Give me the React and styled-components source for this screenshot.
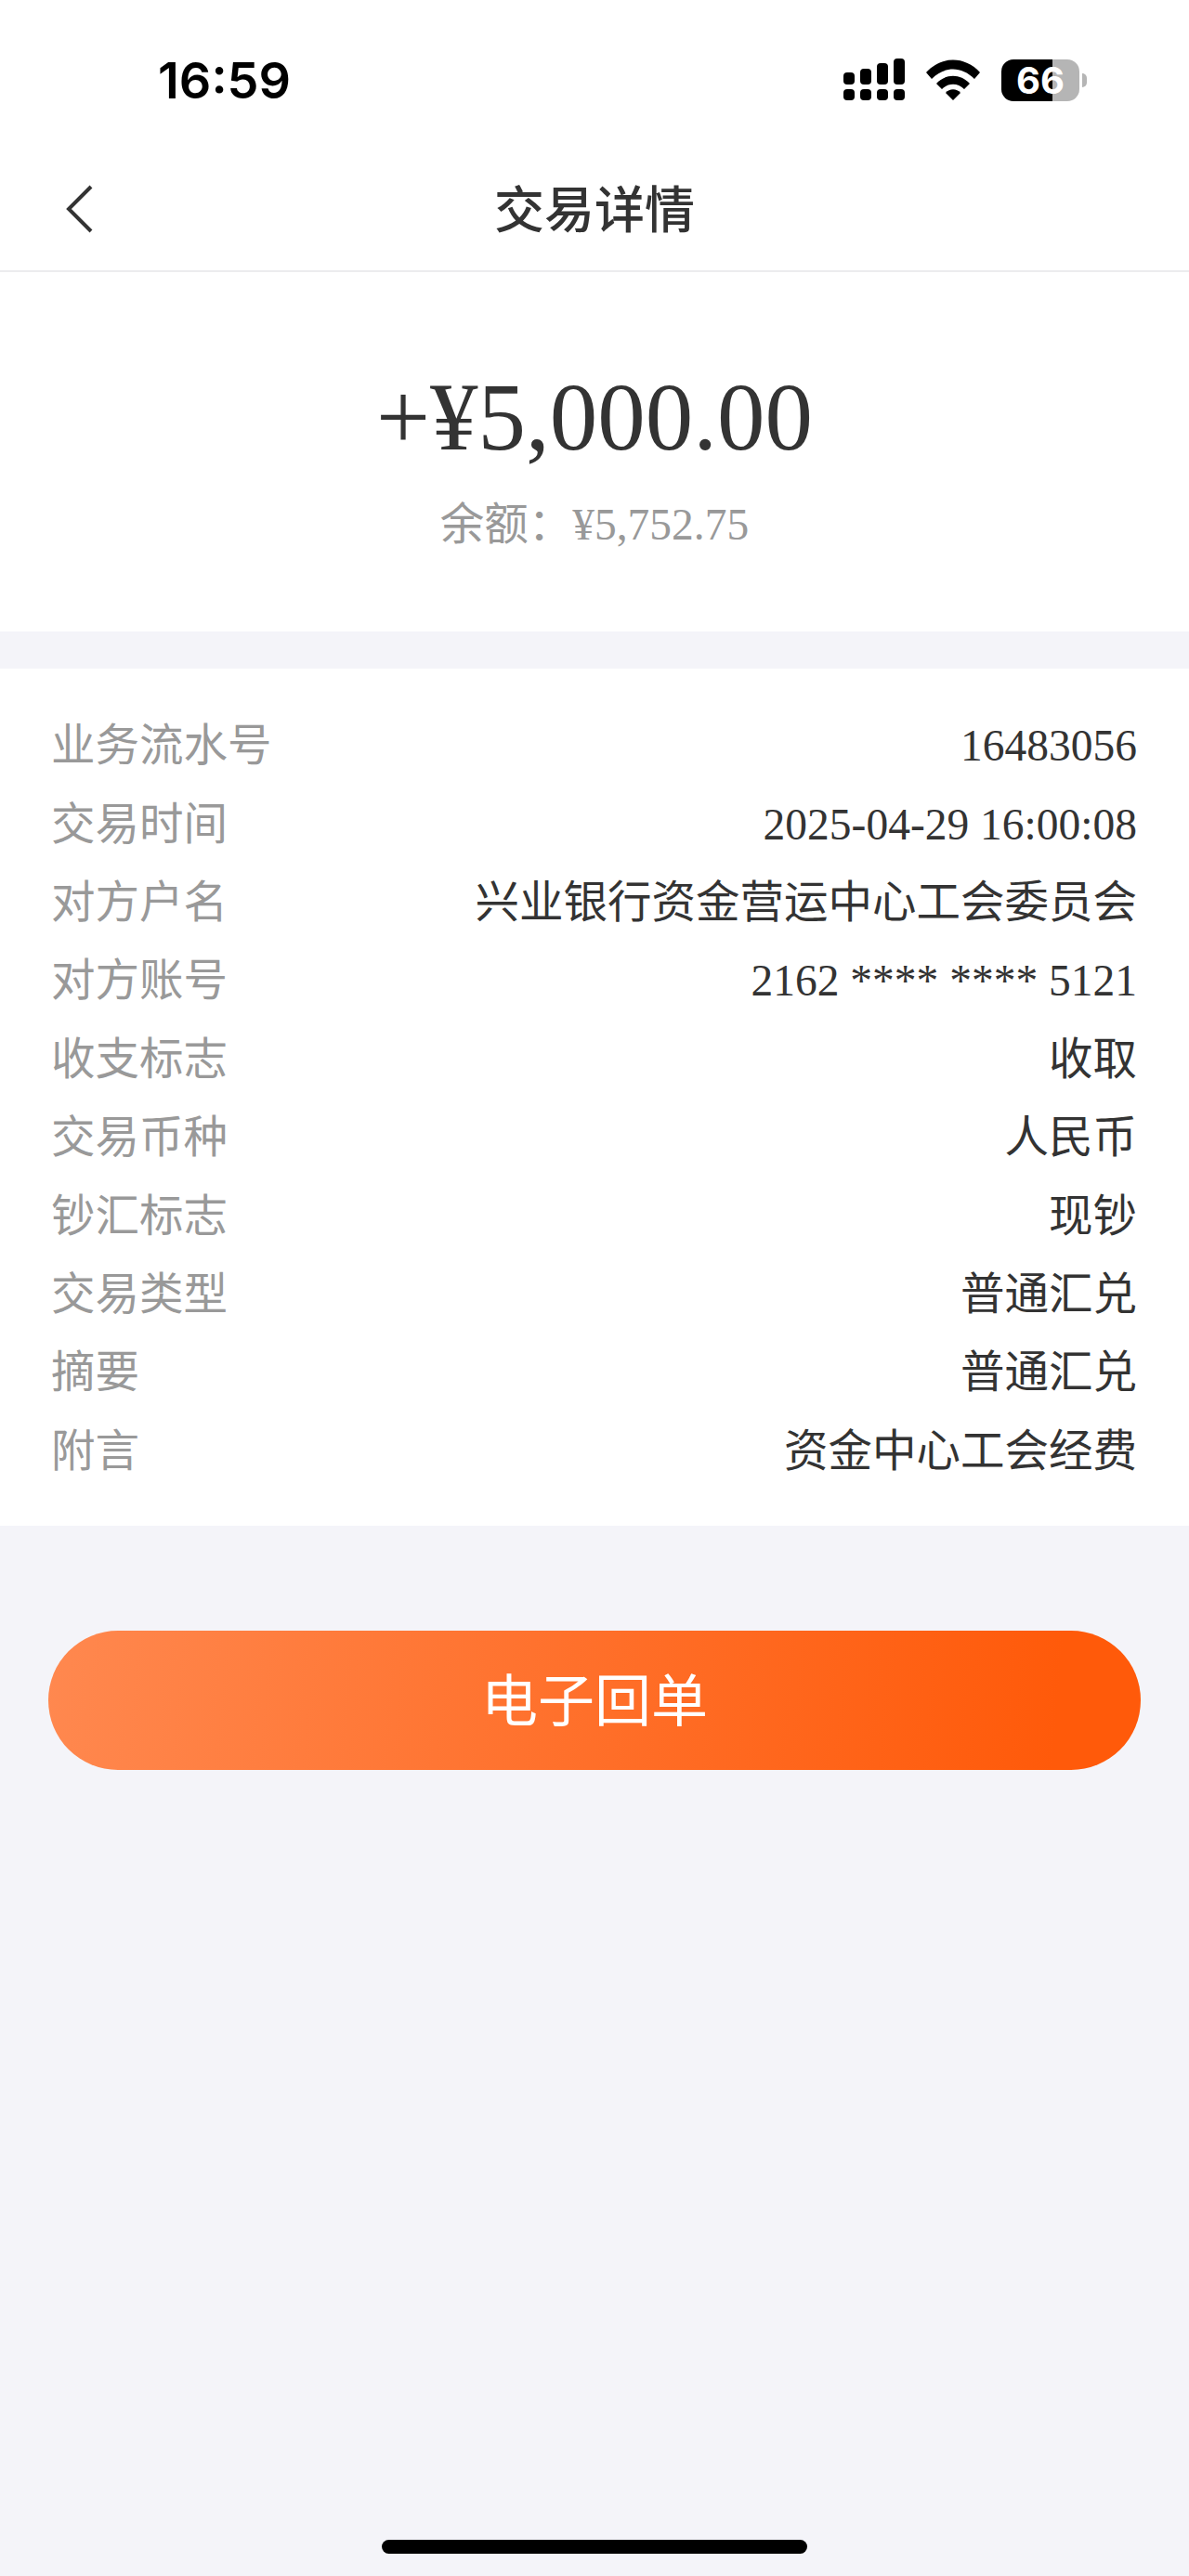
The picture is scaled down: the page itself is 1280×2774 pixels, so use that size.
import React from 'react';
import styled, { createGlobalStyle } from 'styled-components';

const GlobalStyle = createGlobalStyle`
  html, body {
    margin: 0;
    padding: 0;
    background: #f4f4f9;
  }
`;

const CJK_SERIF = `"Liberation Serif", "Noto Sans CJK SC", serif`;

const Page = styled.div`
  width: 1280px;
  height: 2774px;
  display: flex;
  flex-direction: column;
  background: #f4f4f9;
  font-family: ${CJK_SERIF};
`;

const StatusBar = styled.div`
  height: 160px;
  box-sizing: border-box;
  padding: 58px 110px 0 170px;
  background: #fff;
  display: flex;
  justify-content: space-between;
  align-items: flex-start;
`;

const Clock = styled.div`
  font-family: Inter, sans-serif;
  font-weight: 600;
  font-size: 54px;
  line-height: 58px;
  color: #000;
`;

const StatusIcons = styled.div`
  display: flex;
  align-items: center;
  gap: 23px;
  padding-top: 5px;
`;

const Battery = styled.div`
  width: 84px;
  height: 45px;
  border-radius: 13px;
  background: linear-gradient(90deg, #000 0 65%, #b5b5b5 65% 100%);
  text-align: center;
  color: #fff;
  font-family: Inter, sans-serif;
  font-weight: 700;
  font-size: 40px;
  line-height: 45px;
`;

const BatteryGroup = styled.div`
  display: flex;
  align-items: center;
  gap: 3px;
`;

const BatteryCap = styled.div`
  width: 5px;
  height: 15px;
  border-radius: 0 5px 5px 0;
  background: #b5b5b5;
`;

const NavBar = styled.div`
  height: 133px;
  box-sizing: border-box;
  background: #fff;
  border-bottom: 2px solid #ececee;
  display: flex;
  align-items: center;
  justify-content: center;
  position: relative;
`;

const BackButton = styled.button`
  position: absolute;
  left: 70px;
  top: 38px;
  padding: 0;
  border: 0;
  background: none;
  display: flex;
`;

const Title = styled.h1`
  margin: -6px 0 0;
  font-family: "Noto Sans CJK SC", sans-serif;
  font-size: 54px;
  line-height: 70px;
  font-weight: 500;
  color: #333;
`;

const AmountPanel = styled.section`
  height: 387px;
  box-sizing: border-box;
  padding-top: 99px;
  background: #fff;
  display: flex;
  flex-direction: column;
  align-items: center;
`;

const Amount = styled.div`
  font-size: 103px;
  line-height: 114px;
  color: #333;
`;

const Balance = styled.div`
  margin-top: 28px;
  font-size: 47.5px;
  line-height: 62px;
  color: #999;
`;

const DetailPanel = styled.section`
  margin-top: 40px;
  padding: 41px 56px 38px 55px;
  background: #fff;
  display: flex;
  flex-direction: column;
`;

const Row = styled.div`
  height: 84.4px;
  display: flex;
  align-items: center;
  justify-content: space-between;
  font-size: 47.5px;
  line-height: 60px;
`;

const Label = styled.span`
  color: #999;
`;

const Value = styled.span`
  color: #333;
`;

const PrimaryButton = styled.button`
  margin: 113px 52px 0;
  height: 150px;
  padding: 0 0 6px;
  border: 0;
  border-radius: 75px;
  background: linear-gradient(95deg, #ff884f 0%, #ff5a0a 92%);
  color: #fff;
  font-family: "Noto Sans CJK SC", sans-serif;
  font-size: 61px;
  font-weight: 400;
`;

const Spacer = styled.div`
  flex: 1;
`;

const HomeIndicator = styled.div`
  align-self: center;
  width: 458px;
  height: 15px;
  margin-bottom: 24px;
  border-radius: 8px;
  background: #000;
`;

const rows = [
  ['业务流水号', '16483056'],
  ['交易时间', '2025-04-29 16:00:08'],
  ['对方户名', '兴业银行资金营运中心工会委员会'],
  ['对方账号', '2162 **** **** 5121'],
  ['收支标志', '收取'],
  ['交易币种', '人民币'],
  ['钞汇标志', '现钞'],
  ['交易类型', '普通汇兑'],
  ['摘要', '普通汇兑'],
  ['附言', '资金中心工会经费'],
];

const SignalIcon = () => (
  <svg width="66" height="46" viewBox="0 0 66 46" fill="#000">
    <rect x="0" y="15" width="12" height="13" rx="4" />
    <rect x="18" y="11" width="12" height="17" rx="4" />
    <rect x="36" y="5" width="12" height="23" rx="4" />
    <rect x="54" y="0" width="12" height="28" rx="4" />
    <rect x="0" y="33" width="12" height="12" rx="4" />
    <rect x="18" y="33" width="12" height="12" rx="4" />
    <rect x="36" y="33" width="12" height="12" rx="4" />
    <rect x="54" y="33" width="12" height="12" rx="4" />
  </svg>
);

const WifiIcon = () => (
  <svg width="58" height="44" viewBox="0 0 58 44" fill="#000">
    <path d="M0 14 C16 -4 42 -4 58 14 L52 21 C38 7 20 7 6 21 Z" />
    <path d="M11 26 C21 15 37 15 47 26 L41 32 C34 25 24 25 17 32 Z" />
    <path d="M21 36 C25 31 33 31 37 36 L29 44 Z" />
  </svg>
);

const BackIcon = () => (
  <svg width="34" height="54" viewBox="0 0 34 54" fill="none" stroke="#333" strokeWidth="4">
    <path d="M28 3 L4 27 L28 51" />
  </svg>
);

const App = () => (
  <Page>
    <GlobalStyle />
    <StatusBar>
      <Clock>16:59</Clock>
      <StatusIcons>
        <SignalIcon />
        <WifiIcon />
        <BatteryGroup>
          <Battery>66</Battery>
          <BatteryCap />
        </BatteryGroup>
      </StatusIcons>
    </StatusBar>
    <NavBar>
      <BackButton>
        <BackIcon />
      </BackButton>
      <Title>交易详情</Title>
    </NavBar>
    <AmountPanel>
      <Amount>+¥5,000.00</Amount>
      <Balance>余额：¥5,752.75</Balance>
    </AmountPanel>
    <DetailPanel>
      {rows.map(([label, value]) => (
        <Row key={label}>
          <Label>{label}</Label>
          <Value>{value}</Value>
        </Row>
      ))}
    </DetailPanel>
    <PrimaryButton>电子回单</PrimaryButton>
    <Spacer />
    <HomeIndicator />
  </Page>
);

export default App;
